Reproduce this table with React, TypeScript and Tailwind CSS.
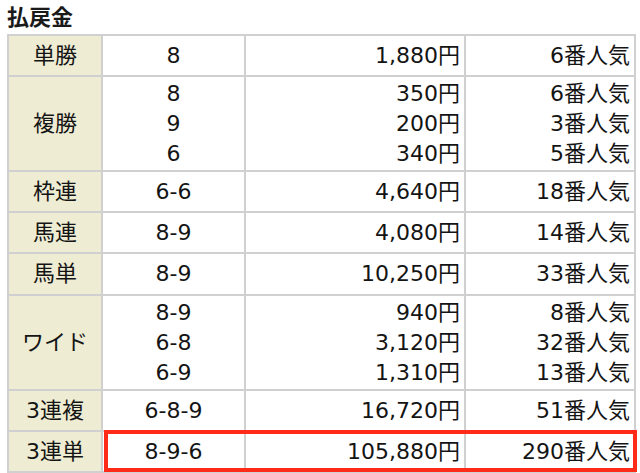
const rows: {
  type: string;
  lines: { combo: string; pay: string; pop: string }[];
  h: string;
  hit?: boolean;
}[] = [
  { type: "単勝", h: "h-[41px]", lines: [{ combo: "8", pay: "1,880円", pop: "6番人気" }] },
  {
    type: "複勝",
    h: "h-[95px]",
    lines: [
      { combo: "8", pay: "350円", pop: "6番人気" },
      { combo: "9", pay: "200円", pop: "3番人気" },
      { combo: "6", pay: "340円", pop: "5番人気" },
    ],
  },
  { type: "枠連", h: "h-[41px]", lines: [{ combo: "6-6", pay: "4,640円", pop: "18番人気" }] },
  { type: "馬連", h: "h-[41px]", lines: [{ combo: "8-9", pay: "4,080円", pop: "14番人気" }] },
  { type: "馬単", h: "h-[42px]", lines: [{ combo: "8-9", pay: "10,250円", pop: "33番人気" }] },
  {
    type: "ワイド",
    h: "h-[95px]",
    lines: [
      { combo: "8-9", pay: "940円", pop: "8番人気" },
      { combo: "6-8", pay: "3,120円", pop: "32番人気" },
      { combo: "6-9", pay: "1,310円", pop: "13番人気" },
    ],
  },
  { type: "3連複", h: "h-[41px]", lines: [{ combo: "6-8-9", pay: "16,720円", pop: "51番人気" }] },
  { type: "3連単", h: "h-[41px]", hit: true, lines: [{ combo: "8-9-6", pay: "105,880円", pop: "290番人気" }] },
];

const cell = "border-r-2 border-b-2 border-[#d0d0d0] flex flex-col justify-center leading-[30px]";

export default function App() {
  return (
    <div
      className="w-[640px] h-[473px] overflow-hidden bg-white text-[#141414]"
      style={{ fontFamily: '"DejaVu Sans", "Noto Sans CJK JP", sans-serif' }}
    >
      <div
        className="h-[34px] pl-[7px] text-[22px] font-bold leading-[30px] text-[#1a1a1a]"
        style={{ fontFamily: '"Noto Sans CJK JP", sans-serif' }}
      >
        払戻金
      </div>
      <div className="ml-[7px] w-[629px] border-l-2 border-t-2 border-[#d0d0d0] text-[22px]">
        {rows.map((row) => (
          <div key={row.type} className={`grid grid-cols-[94px_533px] ${row.h}`}>
            <div className={`${cell} items-center bg-[#eeecd3]`}>{row.type}</div>
            <div className="relative grid grid-cols-[143px_220px_170px]">
              <div className={`${cell} items-center`}>
                {row.lines.map((l, i) => (
                  <span key={i}>{l.combo}</span>
                ))}
              </div>
              <div className={`${cell} items-end pr-[4px]`}>
                {row.lines.map((l, i) => (
                  <span key={i}>{l.pay}</span>
                ))}
              </div>
              <div className={`${cell} items-end pr-[4px]`}>
                {row.lines.map((l, i) => (
                  <span key={i}>{l.pop}</span>
                ))}
              </div>
              {row.hit && (
                <div className="pointer-events-none absolute -top-[2px] left-[1px] -right-[1px] bottom-[1px] border-[4px] border-[#ff2a17]" />
              )}
            </div>
          </div>
        ))}
      </div>
    </div>
  );
}
